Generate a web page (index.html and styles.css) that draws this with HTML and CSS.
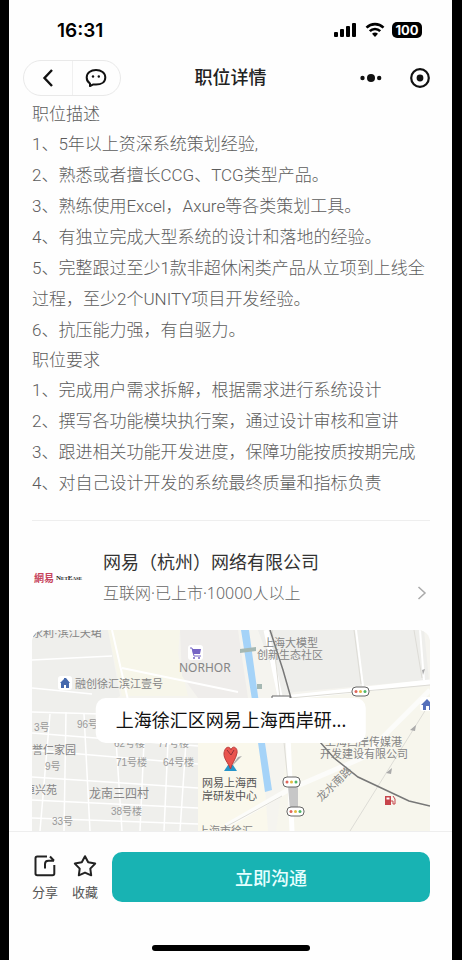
FILE: index.html
```html
<!DOCTYPE html>
<html lang="zh-CN">
<head>
    <meta charset="UTF-8">
    <meta name="viewport" content="width=device-width, initial-scale=1.0">
    <title>职位详情</title>
    <link rel="stylesheet" href="styles.css">
</head>
<body>
    <div class="phone">
        <!-- Status bar -->
        <div class="status-bar">
            <span class="time">16:31</span>
            <div class="status-icons">
                <svg width="24" height="16" viewBox="0 0 24 16">
                    <rect x="0" y="10" width="4" height="5" rx="1"/>
                    <rect x="6" y="7" width="4" height="8" rx="1"/>
                    <rect x="12" y="4" width="4" height="11" rx="1"/>
                    <rect x="18" y="1" width="4" height="14" rx="1"/>
                </svg>
                <svg width="20" height="16" viewBox="0 0 20 16" fill="none" stroke="#000" stroke-width="2.6">
                    <path d="M1.5 5.6a12.2 12.2 0 0 1 17 0"/>
                    <path d="M4.8 9.2a7.4 7.4 0 0 1 10.4 0"/>
                    <path d="M10 15l-3-3.2a4.4 4.4 0 0 1 6 0z" fill="#000" stroke="none"/>
                </svg>
                <span class="battery">100</span>
            </div>
        </div>

        <!-- Navigation -->
        <header class="nav">
            <div class="capsule">
                <button type="button" aria-label="返回">
                    <svg width="12" height="18" viewBox="0 0 12 18" fill="none" stroke="#111" stroke-width="2.4">
                        <path d="M10 1L2.5 9l7.5 8"/>
                    </svg>
                </button>
                <button type="button" aria-label="消息">
                    <svg width="22" height="20" viewBox="0 0 22 20" fill="none" stroke="#111" stroke-width="2">
                        <path d="M5 18V15.500C2.800 14 1.700 11.900 1.700 9.400C1.700 4.800 5.800 2 11 2s9.300 2.800 9.300 7.400s-4.100 7.200-9.300 7.200c-1.200 0-1.800 0-2.600-.2z" stroke-linejoin="round"/>
                        <circle cx="8" cy="8.500" r="1.200" fill="#111" stroke="none"/>
                        <circle cx="13.800" cy="8.500" r="1.200" fill="#111" stroke="none"/>
                    </svg>
                </button>
            </div>
            <h1>职位详情</h1>
            <div class="nav-right">
                <button type="button" aria-label="更多">
                    <svg width="22" height="22" viewBox="0 0 22 22" fill="#111">
                        <circle cx="2.500" cy="11" r="2.200"/>
                        <circle cx="11" cy="11" r="4"/>
                        <circle cx="19.200" cy="11" r="2.200"/>
                    </svg>
                </button>
                <button type="button" aria-label="关闭">
                    <svg width="22" height="22" viewBox="0 0 22 22">
                        <circle cx="11" cy="11" r="8.800" fill="none" stroke="#111" stroke-width="2.200"/>
                        <circle cx="11" cy="11" r="3.400" fill="#111"/>
                    </svg>
                </button>
            </div>
        </header>

        <main>
            <!-- Job description -->
            <section class="detail">
                <h2>职位描述</h2>
                <p>1、5年以上资深系统策划经验,</p>
                <p>2、熟悉或者擅长CCG、TCG类型产品。</p>
                <p>3、熟练使用Excel，Axure等各类策划工具。</p>
                <p>4、有独立完成大型系统的设计和落地的经验。</p>
                <p>5、完整跟过至少1款非超休闲类产品从立项到上线全过程，至少2个UNITY项目开发经验。</p>
                <p>6、抗压能力强，有自驱力。</p>
                <h2>职位要求</h2>
                <p>1、完成用户需求拆解，根据需求进行系统设计</p>
                <p>2、撰写各功能模块执行案，通过设计审核和宣讲</p>
                <p>3、跟进相关功能开发进度，保障功能按质按期完成</p>
                <p>4、对自己设计开发的系统最终质量和指标负责</p>
            </section>

            <!-- Company -->
            <a class="company" href="#">
                <span class="logo"><span class="logo-cn">網易</span><span class="logo-en">NetEase</span></span>
                <span class="company-info">
                    <span class="company-name">网易（杭州）网络有限公司</span>
                    <span class="company-meta">互联网·已上市·10000人以上</span>
                </span>
                <svg class="arrow" width="10" height="14" viewBox="0 0 10 14" fill="none" stroke="#aaa" stroke-width="1.500">
                    <path d="M1.500 1l6.500 6-6.500 6"/>
                </svg>
            </a>

            <!-- Map -->
            <div class="map">
                <svg class="map-canvas" viewBox="0 0 398 201" preserveAspectRatio="xMidYMid slice">
                    <rect width="398" height="201" fill="#f5f4ef"/>
                    <!-- blocks -->
                    <path d="M0 0H76L88 66L64 82H166V201H0z" fill="#efefec"/>
                    <path d="M76 0H148L146 24L156 66H90z" fill="#f7f6ea"/>
                    <path d="M148 0H206L216 68H166L150 46z" fill="#efedeb"/>
                    <path d="M226 0H392L397 50L262 62L250 66z" fill="#eeeeeb"/>
                    <path d="M166 112H230L236 201H166z" fill="#faf8ec"/>
                    <path d="M262 68L398 56V201H244z" fill="#f7f6ed"/>
                    <!-- small streets -->
                    <g fill="none" stroke="#fff" stroke-width="1.500">
                        <path d="M0 30L80 26M0 58L60 64M0 82L70 84M0 103L166 116M0 120L166 134M0 147L166 158M0 170L166 178M0 188L166 194"/>
                        <path d="M34 82L32 201M52 84L58 201M84 110L90 201M112 112L108 201M136 112L132 201M18 84L8 201M154 112L148 201"/>
                        <path d="M90 38L206 62M80 0L96 70M324 0L331 56M388 0L392 50" stroke-width="2"/>
                    </g>
                    <!-- main roads -->
                    <g fill="none" stroke="#fff" stroke-width="5">
                        <path d="M234 0L256 104L260 201M252 68L398 52"/>
                        <path d="M194 196L256 160L330 128L398 60" stroke="#fcfcfa"/>
                    </g>
                    <g fill="none" stroke="#dddcd6" stroke-width="1">
                        <path d="M240 0L248 68M252 112L256 152M258 68L398 55M322 0L329 54M382 0L390 48"/>
                        <path d="M396 76L318 201M186 201L250 166"/>
                    </g>
                    <!-- river -->
                    <path d="M209 0H217L226 66L240 160L233 162L220 70z" fill="#a5d3f8"/>
                    <path d="M208 19L224 17V21L208 23zM225 54H230V59H225z" fill="#a5b8b3"/>
                    <!-- railway -->
                    <path d="M238 0L251 40L259 68M288 112L302 128L326 147L377 171L398 176" fill="none" stroke="#777" stroke-width="1.500"/>
                    <path d="M256 156h10v24h-8z" fill="#c7c7c7"/>
                    <path d="M240 66h18v10h-18z" fill="#fff" stroke="#666"/>
                    <g fill="#aaa">
                        <path d="M378 100l6-5-1 6zM354 143l6-5-1 6zM390 40l3-1-2 6z"/>
                    </g>
                    <!-- traffic lights -->
                    <g>
                        <g class="light"><rect x="320" y="57" width="17" height="9" rx="4"/><circle cx="324" cy="61.500" r="1.500" fill="#e0675b"/><circle cx="328.500" cy="61.500" r="1.500" fill="#e3bb42"/><circle cx="333" cy="61.500" r="1.500" fill="#50b768"/></g>
                        <g class="light"><rect x="251" y="147" width="17" height="10" rx="4"/><circle cx="255" cy="152" r="1.500" fill="#e0675b"/><circle cx="259.500" cy="152" r="1.500" fill="#e3bb42"/><circle cx="264" cy="152" r="1.500" fill="#50b768"/></g>
                        <g class="light"><rect x="255" y="177" width="17" height="9" rx="4"/><circle cx="259" cy="181.500" r="1.500" fill="#e0675b"/><circle cx="263.500" cy="181.500" r="1.500" fill="#e3bb42"/><circle cx="268" cy="181.500" r="1.500" fill="#50b768"/></g>
                    </g>
                    <!-- labels -->
                    <g class="label">
                        <text x="0" y="7">永利·滨江天珺</text>
                        <text x="43" y="58">融创徐汇滨江壹号</text>
                        <text x="147" y="42" class="latin">NORHOR</text>
                        <text x="231" y="17">上海大模型</text>
                        <text x="225" y="29">创新生态社区</text>
                        <text x="170" y="157" class="dark">网易上海西</text>
                        <text x="170" y="170" class="dark">岸研发中心</text>
                        <text x="293" y="116">上海西岸传媒港</text>
                        <text x="288" y="128">开发建设有限公司</text>
                        <text x="0" y="124">誉仁家园</text>
                        <text x="-8" y="164">恒兴苑</text>
                        <text x="57" y="168" class="big">龙南三四村</text>
                        <text x="166" y="205">上海市徐汇</text>
                        <text x="289" y="172" transform="rotate(-44 289 172)">龙水南路</text>
                    </g>
                    <g class="label light-label">
                        <text x="2" y="101">3号</text>
                        <text x="45" y="98">96号</text>
                        <text x="13" y="140">9号</text>
                        <text x="82" y="117">62号楼</text>
                        <text x="126" y="117">77号楼</text>
                        <text x="84" y="136">71号楼</text>
                        <text x="131" y="136">64号楼</text>
                        <text x="79" y="185">38号楼</text>
                        <text x="20" y="195">33号</text>
                    </g>
                    <!-- places -->
                    <rect x="156" y="15" width="15" height="15" rx="3" fill="#fff"/>
                    <path d="M158 18h2l2 8h7" fill="none" stroke="#7564c4"/>
                    <path d="M160 19h9l-1 5h-7z" fill="#7564c4"/>
                    <circle cx="162" cy="28" r="1" fill="#7564c4"/>
                    <circle cx="167" cy="28" r="1" fill="#7564c4"/>
                    <rect x="26" y="46" width="14" height="14" rx="3" fill="#fff"/>
                    <path d="M28 53l4-4V48h2l4 5h-1v5h-3v-3h-2v3h-3v-5z" fill="#4569ad"/>
                    <rect x="388" y="67" width="14" height="14" rx="3" fill="#fff"/>
                    <path d="M389 75l6-6 5 5v6h-3v-4h-3v4h-3v-5z" fill="#5570bb"/>
                    <path d="M353 166h6v9h-6z" fill="#c7444b"/>
                    <path d="M354.500 167.500h3v2h-3z" fill="#fff"/>
                    <path d="M359 171h2v3h2v-5l-2-3" fill="none" stroke="#c7444b"/>
                    <!-- pin -->
                    <path d="M199 137l11-11-4 1z" fill="#aaa"/>
                    <path d="M192 141l4-6h5l4 6z" fill="#2695c9"/>
                    <path d="M198.500 139c-2-6-7-10-6.500-16 1-7 6-7 7-3 1-5 7-3 6 3-1 6-5 10-6.500 16z" fill="#e9544e" stroke="#b73a3a"/>
                    <path d="M195 120l4 5 3-5" fill="none" stroke="#8f3038"/>
                </svg>
                <div class="address">上海徐汇区网易上海西岸研...</div>
            </div>
        </main>

        <!-- Bottom actions -->
        <footer class="footer">
            <div class="actions">
                <button type="button" class="action">
                    <svg width="24" height="24" viewBox="0 0 24 24" fill="none" stroke="#222" stroke-width="2">
                        <path d="M14 2.500H4.200Q2.500 2.500 2.500 4.200V19.500Q2.500 21.300 4.200 21.300H19.500Q21.300 21.300 21.300 19.500V11"/>
                        <path d="M12 14.500V10Q12 6.700 15.500 6.700H21M17 2.500L21 6.700"/>
                    </svg>
                    <span>分享</span>
                </button>
                <button type="button" class="action">
                    <svg width="24" height="24" viewBox="0 0 24 24" fill="none" stroke="#222" stroke-width="2" stroke-linejoin="round">
                        <path d="M12 2.200L15.200 8.200L22.200 9.600L17.300 14.600L18.200 21.300L12 18.600L5.800 21.300L6.700 14.600L1.800 9.600L8.800 8.200z"/>
                    </svg>
                    <span>收藏</span>
                </button>
                <button type="button" class="chat-btn">立即沟通</button>
            </div>
            <div class="home-bar"></div>
        </footer>
    </div>
</body>
</html>
```
FILE: styles.css
```css
* {
    box-sizing: border-box;
}

body {
    margin: 0;
    padding: 0 10px 0 9px;
    background-color: #000;
    color: #222;
    font-family: "Liberation Sans", "Noto Sans CJK SC", sans-serif;
}

h1, h2, p {
    margin: 0;
}

button {
    margin: 0;
    padding: 0;
    border: none;
    background: none;
    font-family: inherit;
    cursor: pointer;
}

svg {
    display: block;
}

.phone {
    display: flex;
    flex-direction: column;
    min-height: 100vh;
    background-color: #fefefe;
}

/* Status bar */
.status-bar {
    display: flex;
    align-items: center;
    justify-content: space-between;
    height: 60px;
    padding: 0 30px 0 48px;
}

.time {
    font-family: Inter, sans-serif;
    font-size: 19px;
    font-weight: 600;
    color: #000;
}

.status-icons {
    display: flex;
    align-items: center;
    gap: 7px;
}

.battery {
    width: 30px;
    height: 16px;
    border-radius: 5px;
    background-color: #000;
    color: #fff;
    font-family: Inter, sans-serif;
    font-size: 13px;
    font-weight: 700;
    line-height: 16px;
    text-align: center;
}

/* Navigation */
.nav {
    display: grid;
    grid-template-columns: 1fr auto 1fr;
    align-items: center;
    height: 39px;
    padding: 0 14px 3px;
}

.nav h1 {
    font-size: 18px;
    font-weight: 500;
    line-height: 36px;
}

.capsule {
    display: flex;
    width: 98px;
    height: 36px;
    border: 1px solid #e9e9e9;
    border-radius: 18px;
}

.capsule button {
    display: flex;
    flex: 1;
    align-items: center;
    justify-content: center;
}

.capsule button + button {
    border-left: 1px solid #f0f0f0;
}

.nav-right {
    display: flex;
    justify-content: flex-end;
    gap: 27px;
    padding-right: 7px;
}

/* Job description */
.detail {
    margin: 0 22px 0 23px;
    padding-bottom: 21px;
    border-bottom: 1px solid #eee;
    color: #5c5c5c;
    font-family: Roboto, "Noto Sans CJK SC", sans-serif;
    font-size: 17px;
    font-weight: 300;
    line-height: 31px;
}

.detail h2 {
    font-size: 17px;
    font-weight: 300;
    line-height: 30px;
}

.detail p + h2 {
    line-height: 29px;
}

/* Company */
.company {
    display: flex;
    align-items: center;
    height: 109px;
    padding: 4px 25px 0;
    color: inherit;
    text-decoration: none;
}

.logo {
    display: flex;
    align-items: center;
    gap: 2px;
    width: 69px;
}

.logo-cn {
    color: #c6435c;
    font-size: 10px;
    font-weight: 700;
}

.logo-en {
    font-family: "Liberation Serif", serif;
    font-size: 7px;
    font-weight: 700;
    font-variant: small-caps;
}

.company-info {
    display: flex;
    flex: 1;
    flex-direction: column;
}

.company-name {
    color: #333;
    font-size: 18px;
    line-height: 30px;
}

.company-meta {
    color: #666;
    font-family: "Noto Sans", "Noto Sans CJK SC", sans-serif;
    font-size: 16px;
    font-weight: 300;
    line-height: 30px;
}

.arrow {
    margin-top: 30px;
}

/* Map */
.map {
    position: relative;
    height: 201px;
    margin: 0 22px 0 23px;
    border-radius: 12px 12px 0 0;
    overflow: hidden;
}

.map-canvas {
    width: 100%;
    height: 100%;
}

.label {
    fill: #858585;
    font-size: 11px;
}

.label .dark {
    fill: #555;
}

.label .big {
    font-size: 12px;
}

.label .latin {
    font-family: "Noto Sans", sans-serif;
    font-size: 12px;
}

.light-label {
    fill: #999;
    font-size: 10px;
}

.light rect {
    fill: #fff;
    stroke: #666;
}

.address {
    position: absolute;
    top: 68px;
    left: 50%;
    padding: 0 20px;
    border-radius: 10px;
    background-color: #fff;
    color: #111;
    font-family: "Noto Sans", "Noto Sans CJK SC", sans-serif;
    font-size: 18px;
    line-height: 45px;
    white-space: nowrap;
    transform: translateX(-50%);
}

/* Bottom actions */
.footer {
    padding: 18px 22px 9px 23px;
    border-top: 1px solid #eee;
}

.actions {
    display: flex;
    align-items: center;
    gap: 14px;
}

.action {
    display: flex;
    flex-direction: column;
    align-items: center;
    gap: 5px;
    padding-top: 4px;
    color: #555;
    font-size: 13px;
    line-height: 20px;
}

.chat-btn {
    flex: 1;
    height: 50px;
    border-radius: 10px;
    background-color: #18b3b3;
    color: #e6ffff;
    font-size: 18px;
    font-weight: 500;
}

.home-bar {
    width: 158px;
    height: 6px;
    margin: 42px auto 0;
    border-radius: 3px;
    background-color: #000;
}
```
